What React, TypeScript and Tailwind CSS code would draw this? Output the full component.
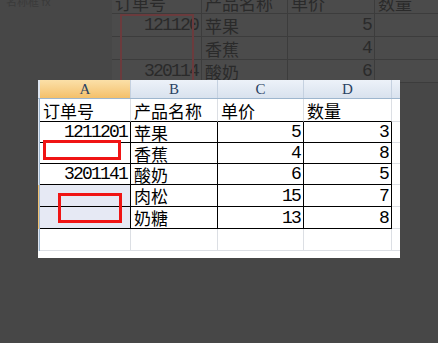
import React from 'react'

const cjk = "font-['Noto_Sans_CJK_SC',sans-serif]"
const num = "font-['Liberation_Mono',monospace] tracking-[-1.8px]"

type Cell = { v?: string; n?: boolean }

const rows: { h: string; cells: Cell[]; sel?: boolean; boxed: boolean }[] = [
  { h: 'h-[23px]', boxed: false, cells: [{ v: '订单号' }, { v: '产品名称' }, { v: '单价' }, { v: '数量' }] },
  { h: 'h-[21px]', boxed: true, cells: [{ v: '1211201', n: true }, { v: '苹果' }, { v: '5', n: true }, { v: '3', n: true }] },
  { h: 'h-[21px]', boxed: true, cells: [{}, { v: '香蕉' }, { v: '4', n: true }, { v: '8', n: true }] },
  { h: 'h-[21px]', boxed: true, cells: [{ v: '3201141', n: true }, { v: '酸奶' }, { v: '6', n: true }, { v: '5', n: true }] },
  { h: 'h-[22px]', boxed: true, sel: true, cells: [{}, { v: '肉松' }, { v: '15', n: true }, { v: '7', n: true }] },
  { h: 'h-[22px]', boxed: true, sel: true, cells: [{}, { v: '奶糖' }, { v: '13', n: true }, { v: '8', n: true }] },
  { h: 'h-[22px]', boxed: false, cells: [{}, {}, {}, {}] },
]

const widths = ['w-[91px]', 'w-[87px]', 'w-[86px]', 'w-[88px]']

function Backdrop() {
  const bg = [
    ['订单号', '产品名称', '单价', '数量'],
    ['121120', '苹果', '5', ''],
    ['', '香蕉', '4', ''],
    ['320114', '酸奶', '6', ''],
  ]
  const bw = ['w-[90px]', 'w-[86px]', 'w-[87px]', 'w-[100px]']
  return (
    <div className="absolute left-[112px] top-[-9px] bg-[#4b4b4b] text-[#2a2a2a] leading-none">
      {bg.map((r, i) => (
        <div key={i} className="flex h-[23px] border-b border-[#3c3c3c]">
          {r.map((v, j) => (
            <div key={j} className={`${bw[j]} border-r border-[#3c3c3c] px-[3px] flex items-center ${/^\d/.test(v) ? `justify-end ${num} text-[18px]` : `${cjk} text-[17px]`}`}>{v}</div>
          ))}
        </div>
      ))}
      <div className="absolute left-[8px] top-[23px] w-[74px] h-[90px] border-2 border-[#6b3b3d]" />
    </div>
  )
}

export default function App() {
  return (
    <div className="relative w-[438px] h-[343px] overflow-hidden bg-[#474747]">
      <div className={`absolute left-[6px] top-[-7px] text-[11px] text-[#3a3a3a] ${cjk}`}>名称框 fx</div>
      <Backdrop />

      {/* popup sheet */}
      <div className="absolute left-[38px] top-[80px] w-[362px] h-[178px] bg-white overflow-hidden text-black leading-none">
        <div className="flex h-[19px] border-b border-[#9eb6ce]">
          <div className="w-[2px] bg-[#dfe6f0]" />
          {['A', 'B', 'C', 'D'].map((c, i) => (
            <div key={c} className={`${widths[i]} border-r border-[#c5d1e0] flex items-center justify-center font-['Liberation_Serif',serif] text-[15px] text-[#2a4262] ${i === 0 ? 'bg-gradient-to-b from-[#fbe0a8] to-[#f4c06a]' : 'bg-gradient-to-b from-[#edf2f9] to-[#d9e2ee]'}`}>{c}</div>
          ))}
          <div className="flex-1 bg-gradient-to-b from-[#edf2f9] to-[#d9e2ee]" />
        </div>

        {rows.map((r, ri) => {
          const nextBoxed = rows[ri + 1]?.boxed
          return (
            <div key={ri} className={`flex ${r.h}`}>
              <div className={`w-[2px] border-r border-[#9eb6ce] ${r.sel ? 'bg-[#f5c270]' : 'bg-[#dfe6f0]'}`} />
              {r.cells.map((c, ci) => {
                const bottom = r.boxed || nextBoxed ? 'border-b-black' : 'border-b-[#dcdfe4]'
                const right = r.boxed ? 'border-r-black' : 'border-r-[#dcdfe4]'
                const bgc = r.sel && ci === 0 ? 'bg-[#e6e9f4]' : ''
                return (
                  <div key={ci} className={`${widths[ci]} border-b border-r ${bottom} ${right} ${bgc} flex items-center ${c.n ? `justify-end pr-[3px] ${num} text-[18px]` : `pl-[3px] ${cjk} text-[17px]`}`}>{c.v}</div>
                )
              })}
              <div className="flex-1 border-b border-[#dcdfe4]" />
            </div>
          )
        })}

        {/* red markers */}
        <div className="absolute left-[5px] top-[60px] w-[78px] h-[20px] border-[3px] border-[#f01414]" />
        <div className="absolute left-[20px] top-[113px] w-[64px] h-[30px] border-[3px] border-[#f01414]" />
      </div>
    </div>
  )
}
